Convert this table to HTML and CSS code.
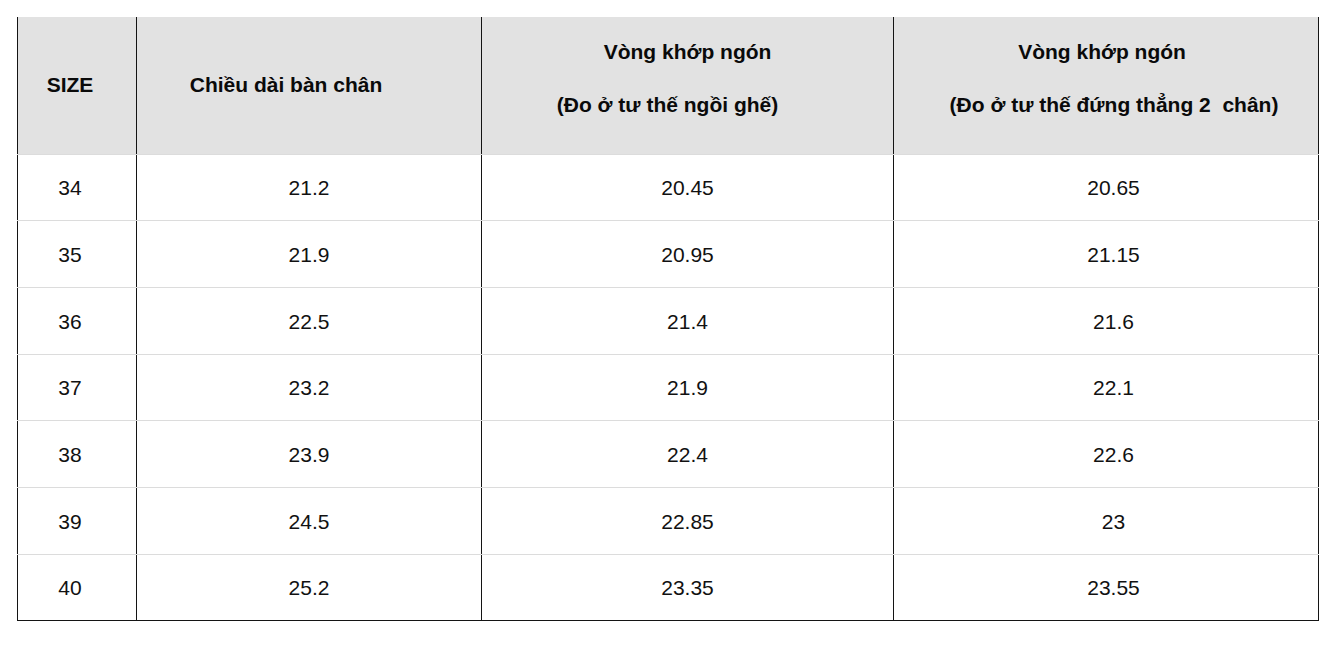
FILE: index.html
```html
<!DOCTYPE html>
<html lang="vi">
<head>
<meta charset="utf-8">
<title>Bảng size</title>
<link rel="stylesheet" href="styles.css">
</head>
<body>
<table class="size-table">
  <colgroup>
    <col class="c1">
    <col class="c2">
    <col class="c3">
    <col class="c4">
  </colgroup>
  <thead>
    <tr class="head-row">
      <th class="col-size">SIZE</th>
      <th class="col-len head-len">Chiều dài bàn chân</th>
      <th class="col-sit double">
        <div class="line">Vòng khớp ngón</div>
        <div class="line sit-sub">(Đo ở tư thế ngồi ghế)</div>
      </th>
      <th class="col-stand double">
        <div class="line stand-main">Vòng khớp ngón</div>
        <div class="line stand-sub">(Đo ở tư thế đứng thẳng 2&nbsp; chân)</div>
      </th>
    </tr>
  </thead>
  <tbody>
    <tr><td class="col-size">34</td><td class="col-len">21.2</td><td class="col-sit">20.45</td><td class="col-stand">20.65</td></tr>
    <tr><td class="col-size">35</td><td class="col-len">21.9</td><td class="col-sit">20.95</td><td class="col-stand">21.15</td></tr>
    <tr><td class="col-size">36</td><td class="col-len">22.5</td><td class="col-sit">21.4</td><td class="col-stand">21.6</td></tr>
    <tr><td class="col-size">37</td><td class="col-len">23.2</td><td class="col-sit">21.9</td><td class="col-stand">22.1</td></tr>
    <tr><td class="col-size">38</td><td class="col-len">23.9</td><td class="col-sit">22.4</td><td class="col-stand">22.6</td></tr>
    <tr><td class="col-size">39</td><td class="col-len">24.5</td><td class="col-sit">22.85</td><td class="col-stand">23</td></tr>
    <tr class="last-row"><td class="col-size">40</td><td class="col-len">25.2</td><td class="col-sit">23.35</td><td class="col-stand">23.55</td></tr>
  </tbody>
</table>
</body>
</html>
```

FILE: styles.css
```css
html, body {
  margin: 0;
  padding: 0;
  background: #ffffff;
}

body {
  padding: 17px 0 0 17px;
  font-family: "Liberation Sans", Arial, sans-serif;
  color: #111111;
}

.size-table {
  border-collapse: collapse;
  table-layout: fixed;
  width: 1301px;
  font-size: 21px;
}

.c1 { width: 119px; }
.c2 { width: 345px; }
.c3 { width: 412px; }
.c4 { width: 425px; }

.size-table th,
.size-table td {
  padding: 0;
  text-align: center;
  vertical-align: middle;
  border-left: 1px solid #141414;
  border-right: 1px solid #141414;
  border-bottom: 1px solid #dcdcdc;
  border-top: none;
}

.size-table th {
  background: #e2e2e2;
  font-weight: bold;
  color: #0a0a0a;
}

.head-row {
  height: 137px;
}

.size-table tbody tr {
  height: 66.7px;
}

.size-table td {
  padding-top: 2px;
}

.last-row td {
  border-bottom: 1px solid #141414;
}

.col-size {
  padding-right: 14px !important;
}

.head-len {
  padding-right: 46px !important;
}

.double {
  padding-bottom: 13px !important;
}

.line {
  line-height: 26px;
}

.line + .line {
  margin-top: 26.7px;
}

.sit-sub {
  padding-right: 40px;
}

.stand-main {
  padding-right: 8px;
}

.stand-sub {
  padding-left: 16px;
}

td.col-stand {
  padding-left: 15px;
}
```
